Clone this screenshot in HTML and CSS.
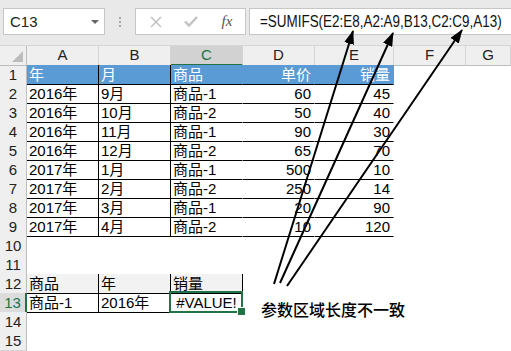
FILE: index.html
```html
<!DOCTYPE html>
<html lang="zh-CN">
<head>
    <meta charset="UTF-8">
    <title>SUMIFS #VALUE!</title>
    <link rel="stylesheet" href="styles.css">
</head>
<body>
    <div class="app">
        <!-- Formula bar -->
        <div class="formula-bar">
            <div class="name-box"><span>C13</span><span class="caret"></span></div>
            <div class="grip"><i></i><i></i><i></i></div>
            <div class="fx-box">
                <span class="btn-x">
                    <svg width="12" height="12" viewBox="0 0 12 12"><path d="M1,1 L11,11 M11,1 L1,11" stroke="#bdbdbd" stroke-width="1.4" fill="none"/></svg>
                </span>
                <span class="btn-ok">
                    <svg width="14" height="11" viewBox="0 0 14 11"><path d="M1,5.5 L5,9.5 L13,1" stroke="#c2c2c2" stroke-width="2.4" fill="none"/></svg>
                </span>
                <span class="btn-fx">fx</span>
            </div>
            <div class="formula"><span>=SUMIFS(E2:E8,A2:A9,B13,C2:C9,A13)</span></div>
        </div>

        <!-- Sheet -->
        <div class="sheet">
            <div class="row head">
                <div class="corner"></div>
                <div class="ch">A</div>
                <div class="ch">B</div>
                <div class="ch active">C</div>
                <div class="ch">D</div>
                <div class="ch">E</div>
                <div class="ch">F</div>
                <div class="ch">G</div>
            </div>
            <div class="row">
                <div class="rh">1</div>
                <div class="c blue b r">年</div>
                <div class="c blue b r">月</div>
                <div class="c blue b">商品</div>
                <div class="c blue b n">单价</div>
                <div class="c blue b n">销量</div>
                <div class="c"></div><div class="c"></div>
            </div>
            <div class="row">
                <div class="rh">2</div>
                <div class="c b r">2016年</div><div class="c b r">9月</div><div class="c b">商品-1</div>
                <div class="c b n">60</div><div class="c b n">45</div>
                <div class="c"></div><div class="c"></div>
            </div>
            <div class="row">
                <div class="rh">3</div>
                <div class="c b r">2016年</div><div class="c b r">10月</div><div class="c b">商品-2</div>
                <div class="c b n">50</div><div class="c b n">40</div>
                <div class="c"></div><div class="c"></div>
            </div>
            <div class="row">
                <div class="rh">4</div>
                <div class="c b r">2016年</div><div class="c b r">11月</div><div class="c b">商品-1</div>
                <div class="c b n">90</div><div class="c b n">30</div>
                <div class="c"></div><div class="c"></div>
            </div>
            <div class="row">
                <div class="rh">5</div>
                <div class="c b r">2016年</div><div class="c b r">12月</div><div class="c b">商品-2</div>
                <div class="c b n">65</div><div class="c b n">70</div>
                <div class="c"></div><div class="c"></div>
            </div>
            <div class="row">
                <div class="rh">6</div>
                <div class="c b r">2017年</div><div class="c b r">1月</div><div class="c b">商品-1</div>
                <div class="c b n">500</div><div class="c b n">10</div>
                <div class="c"></div><div class="c"></div>
            </div>
            <div class="row">
                <div class="rh">7</div>
                <div class="c b r">2017年</div><div class="c b r">2月</div><div class="c b">商品-2</div>
                <div class="c b n">250</div><div class="c b n">14</div>
                <div class="c"></div><div class="c"></div>
            </div>
            <div class="row">
                <div class="rh">8</div>
                <div class="c b r">2017年</div><div class="c b r">3月</div><div class="c b">商品-1</div>
                <div class="c b n">20</div><div class="c b n">90</div>
                <div class="c"></div><div class="c"></div>
            </div>
            <div class="row">
                <div class="rh">9</div>
                <div class="c b r">2017年</div><div class="c b r">4月</div><div class="c b">商品-2</div>
                <div class="c b n">10</div><div class="c b n">120</div>
                <div class="c"></div><div class="c"></div>
            </div>
            <div class="row">
                <div class="rh">10</div>
                <div class="c"></div><div class="c"></div><div class="c"></div><div class="c"></div>
                <div class="c"></div><div class="c"></div><div class="c"></div>
            </div>
            <div class="row">
                <div class="rh">11</div>
                <div class="c"></div><div class="c"></div><div class="c"></div><div class="c"></div>
                <div class="c"></div><div class="c"></div><div class="c"></div>
            </div>
            <div class="row">
                <div class="rh">12</div>
                <div class="c gray b r">商品</div><div class="c gray b r">年</div><div class="c gray b r">销量</div>
                <div class="c"></div><div class="c"></div><div class="c"></div><div class="c"></div>
            </div>
            <div class="row">
                <div class="rh active">13</div>
                <div class="c b r">商品-1</div><div class="c b r">2016年</div><div class="c b r sel">#VALUE!</div>
                <div class="c"></div><div class="c"></div><div class="c"></div><div class="c"></div>
            </div>
            <div class="row">
                <div class="rh">14</div>
                <div class="c"></div><div class="c"></div><div class="c"></div><div class="c"></div>
                <div class="c"></div><div class="c"></div><div class="c"></div>
            </div>
            <div class="row">
                <div class="rh">15</div>
                <div class="c"></div><div class="c"></div><div class="c"></div><div class="c"></div>
                <div class="c"></div><div class="c"></div><div class="c"></div>
            </div>
        </div>

        <!-- Callout arrows -->
        <svg class="arrows" width="511" height="351" viewBox="0 0 511 351">
            <defs>
                <marker id="head" viewBox="0 0 14 10" refX="13" refY="5" markerWidth="14" markerHeight="10"
                        markerUnits="userSpaceOnUse" orient="auto">
                    <path d="M0,0 L14,5 L0,10 z" fill="#000"/>
                </marker>
            </defs>
            <line x1="274" y1="284" x2="353" y2="31" marker-end="url(#head)"/>
            <line x1="280" y1="283" x2="393" y2="33" marker-end="url(#head)"/>
            <line x1="287" y1="286" x2="462" y2="30" marker-end="url(#head)"/>
        </svg>
        <div class="note">参数区域长度不一致</div>
    </div>
</body>
</html>
```

FILE: styles.css
```css
* {
    margin: 0;
    padding: 0;
    box-sizing: border-box;
}

body {
    font-family: "Liberation Sans", "Noto Sans CJK SC", sans-serif;
    background: #fff;
    color: #000;
    width: 511px;
    height: 351px;
    overflow: hidden;
}

.app {
    position: relative;
    width: 511px;
    height: 351px;
    overflow: hidden;
}

/* Formula bar */
.formula-bar {
    display: flex;
    align-items: flex-start;
    height: 46px;
    padding: 8px 0 0 3px;
    background: #e9e9e9;
    border-bottom: 1px solid #d6d6d6;
}

.name-box {
    display: flex;
    align-items: center;
    justify-content: space-between;
    width: 102px;
    height: 27px;
    padding: 0 5px 0 6px;
    background: #fff;
    border: 1px solid #c6c6c6;
    font-size: 15px;
    color: #222;
}

.caret {
    width: 0;
    height: 0;
    border-left: 4px solid transparent;
    border-right: 4px solid transparent;
    border-top: 4px solid #666;
}

.grip {
    display: flex;
    flex-direction: column;
    align-items: center;
    gap: 2px;
    width: 30px;
    padding-top: 9px;
}

.grip i {
    display: block;
    width: 2px;
    height: 2px;
    background: #a6a6a6;
}

.fx-box {
    display: flex;
    align-items: center;
    width: 111px;
    height: 27px;
    background: #fff;
    border: 1px solid #c6c6c6;
}

.btn-x,
.btn-ok {
    display: flex;
    align-items: center;
    justify-content: center;
    height: 25px;
}

.btn-x {
    width: 37px;
    padding-left: 2px;
}

.btn-ok {
    width: 36px;
}

.btn-fx {
    width: 36px;
    text-align: center;
    font-family: "Liberation Serif", serif;
    font-style: italic;
    font-size: 15px;
    color: #555;
}

.formula {
    flex: 1;
    height: 27px;
    margin: 0 -2px 0 3px;
    padding: 0 0 0 10px;
    background: #fff;
    border: 1px solid #c6c6c6;
    font-size: 16px;
    line-height: 25px;
    color: #111;
    white-space: nowrap;
    overflow: hidden;
}

.formula span {
    display: inline-block;
    transform: scaleX(0.84);
    transform-origin: left center;
}

/* Sheet */
.row {
    display: grid;
    grid-template-columns: 27px 72px 72px 72px 72px 79px 72px 45px;
    height: 19px;
}

.head {
    background: #efefef;
}

.corner {
    position: relative;
    border-right: 1px solid #bdbdbd;
    border-bottom: 1px solid #bdbdbd;
}

.corner::after {
    content: "";
    position: absolute;
    right: 3px;
    bottom: 3px;
    width: 0;
    height: 0;
    border-left: 11px solid transparent;
    border-bottom: 11px solid #bcbcbc;
}

.ch {
    text-align: center;
    font-size: 15px;
    line-height: 18px;
    color: #222;
    border-right: 1px solid #d4d4d4;
    border-bottom: 1px solid #bdbdbd;
}

.ch.active {
    background: #d2d2d2;
    color: #217346;
    border-bottom: 2px solid #217346;
}

.rh {
    background: #efefef;
    text-align: center;
    font-size: 15px;
    line-height: 19px;
    color: #222;
    border-right: 1px solid #bdbdbd;
    border-bottom: 1px solid #d4d4d4;
}

.rh.active {
    background: #dcdcdc;
    color: #217346;
    border-right: 2px solid #217346;
}

.c {
    padding: 0 2px;
    font-size: 15px;
    line-height: 19px;
    white-space: nowrap;
    overflow: hidden;
    border-right: 1px solid transparent;
    border-bottom: 1px solid transparent;
}

.c.b {
    border-bottom-color: #000;
}

.c.r {
    border-right-color: #000;
}

.c.n {
    text-align: right;
    padding-right: 3px;
}

.c.blue {
    background: #5b9bd5;
    color: #fff;
}

.c.gray {
    background: #f2f2f2;
}

.c.sel {
    position: relative;
    overflow: visible;
    text-align: center;
}

.c.sel::before {
    content: "";
    position: absolute;
    left: -2px;
    top: -2px;
    right: -1px;
    bottom: -1px;
    border: 2px solid #217346;
}

.c.sel::after {
    content: "";
    position: absolute;
    right: -4px;
    bottom: -4px;
    width: 7px;
    height: 7px;
    background: #217346;
    border: 1px solid #fff;
}

/* Callout */
.arrows {
    position: absolute;
    left: 0;
    top: 0;
    pointer-events: none;
}

.arrows line {
    stroke: #000;
    stroke-width: 2;
}

.note {
    position: absolute;
    left: 261px;
    top: 299px;
    font-family: "Noto Sans CJK SC", sans-serif;
    font-size: 16px;
    line-height: 20px;
    font-weight: 500;
    color: #000;
}
```
